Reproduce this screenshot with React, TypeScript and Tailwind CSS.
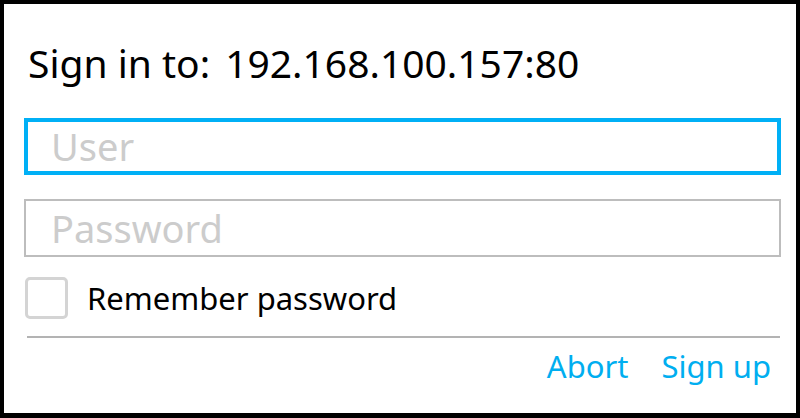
export default function App() {
  return (
    <div
      className="w-[800px] h-[418px] bg-white border-black border-t-4 border-l-4 border-r-4 border-b-[5px] pl-[20px] pr-[15px] flex flex-col text-black"
      style={{ fontFamily: '"Noto Sans", "Open Sans", sans-serif' }}
    >
      {/* header */}
      <div className="mt-[35px] pl-[4px] flex items-baseline text-[39px] leading-[48px] whitespace-nowrap">
        <span>Sign in to:</span>
        <span className="ml-[15px]">192.168.100.157:80</span>
      </div>

      <div className="mt-[31px] h-[57px] border-4 border-[#00b0f6] flex items-center pl-[23px]">
        <span className="text-[38px] text-[#cccccc]">User</span>
      </div>

      <div className="mt-[24px] h-[58px] border-2 border-[#bdbdbd] flex items-center pl-[25px]">
        <span className="text-[38px] text-[#cccccc]">Password</span>
      </div>

      <div className="mt-[18px] flex items-center">
        <div className="ml-[1px] w-[43px] h-[42px] rounded-[5px] border-[3px] border-[#d4d4d4]" />
        <span className="ml-[19px] text-[31px]">Remember password</span>
      </div>

      <div className="mt-[14px] ml-[3px] mr-[1px] h-[2px] bg-[#b3b3b3]" />

      <div className="flex justify-end gap-[33px] pr-[10px] mt-[5px] text-[31px] text-[#00aef0]">
        <button>Abort</button>
        <button>Sign up</button>
      </div>
    </div>
  );
}
